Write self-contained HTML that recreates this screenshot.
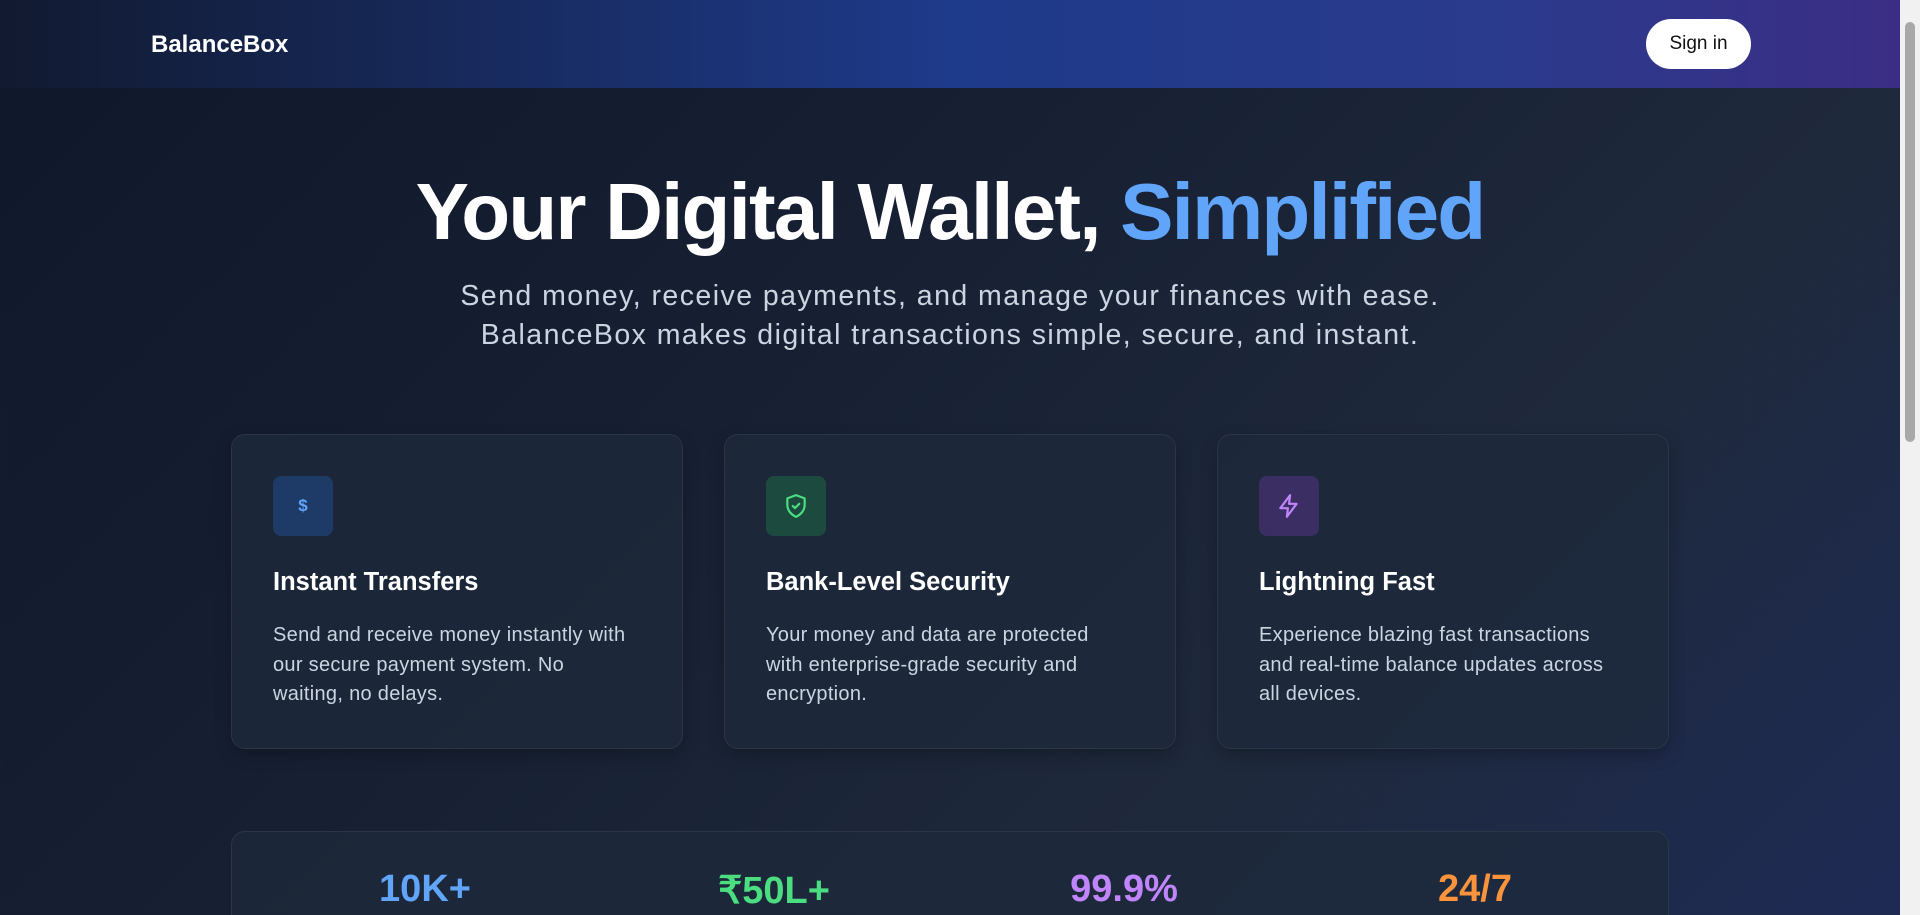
<!DOCTYPE html>
<html><head><meta charset="utf-8"><style>
*{margin:0;padding:0;box-sizing:border-box}
html,body{width:1920px;height:915px;overflow:hidden}
body{font-family:"Liberation Sans",sans-serif;background:linear-gradient(135deg,#0f172a 0%,#172033 40%,#1e293b 70%,#1e2a55 100%);color:#fff;position:relative}
.sb{position:absolute;right:0;top:0;width:20px;height:915px;background:#f1f1f1}
.sb i{position:absolute;left:5px;top:22px;width:10px;height:420px;background:#a8a8a8;border-radius:5px}
.hdr{position:absolute;left:0;top:0;width:1900px;height:88px;background:linear-gradient(90deg,#111a30 0%,#1e3a8a 50%,#2b3a8c 80%,#3b2d85 100%)}
.logo{position:absolute;left:151px;top:31px;font-size:24px;font-weight:bold}
.btn{position:absolute;left:1646px;top:19px;width:105px;height:50px;background:#fff;border-radius:25px;color:#111;font-size:19px;display:flex;align-items:center;justify-content:center}
h1{position:absolute;left:0;width:1900px;top:164px;text-align:center;font-size:80px;letter-spacing:-1.8px;font-weight:bold;line-height:96px}
h1 span{color:#60a5fa}
.sub{position:absolute;left:0;width:1900px;top:277px;text-align:center;font-size:28.5px;letter-spacing:1.45px;line-height:39px;color:#cbd5e1}
.card{position:absolute;top:434px;width:452px;height:315px;background:rgba(30,41,59,.75);border:1px solid #2a3548;border-radius:14px;box-shadow:0 6px 16px rgba(0,0,0,.25)}
.ic{position:absolute;left:41px;top:41px;width:60px;height:60px;border-radius:8px;display:flex;align-items:center;justify-content:center}
.card h3{position:absolute;left:41px;top:133px;font-size:25.5px;font-weight:bold}
.card p{position:absolute;left:41px;top:186px;width:358px;font-size:20px;letter-spacing:.3px;line-height:29.5px;color:#cbd5e1}
.stats{position:absolute;left:231px;top:831px;width:1438px;height:120px;background:rgba(30,41,59,.75);border:1px solid #2a3548;border-radius:14px}
.n{position:absolute;top:868px;font-size:38px;font-weight:bold;transform:translateX(-50%)}
</style></head><body>
<div class="hdr"><div class="logo">BalanceBox</div><div class="btn">Sign in</div></div>
<h1>Your Digital Wallet, <span>Simplified</span></h1>
<div class="sub">Send money, receive payments, and manage your finances with ease.<br>BalanceBox makes digital transactions simple, secure, and instant.</div>
<div class="card" style="left:231px"><div class="ic" style="background:#1e3a66"><span style="color:#60a5fa;font-weight:bold;font-size:17px">$</span></div><h3>Instant Transfers</h3><p>Send and receive money instantly with our secure payment system. No waiting, no delays.</p></div>
<div class="card" style="left:724px"><div class="ic" style="background:#1c4a3e"><svg width="26" height="26" viewBox="0 0 24 24" fill="none" stroke="#4ade80" stroke-width="2" stroke-linecap="round" stroke-linejoin="round"><path d="M12 2l8 3v6c0 5-3.5 9-8 11-4.5-2-8-6-8-11V5z"/><path d="M9 12l2 2 4-4"/></svg></div><h3>Bank-Level Security</h3><p>Your money and data are protected with enterprise-grade security and encryption.</p></div>
<div class="card" style="left:1217px"><div class="ic" style="background:#3a2e63"><svg width="26" height="26" viewBox="0 0 24 24" fill="none" stroke="#c084fc" stroke-width="2" stroke-linecap="round" stroke-linejoin="round"><path d="M13 2L4 14h7l-1 8 9-12h-7z"/></svg></div><h3>Lightning Fast</h3><p>Experience blazing fast transactions and real-time balance updates across all devices.</p></div>
<div class="stats"></div>
<div class="n" style="left:425px;color:#60a5fa">10K+</div>
<div class="n" style="left:774px;color:#4ade80">₹50L+</div>
<div class="n" style="left:1124px;color:#c084fc">99.9%</div>
<div class="n" style="left:1475px;color:#fb923c">24/7</div>
<div class="sb"><i></i></div>
</body></html>
